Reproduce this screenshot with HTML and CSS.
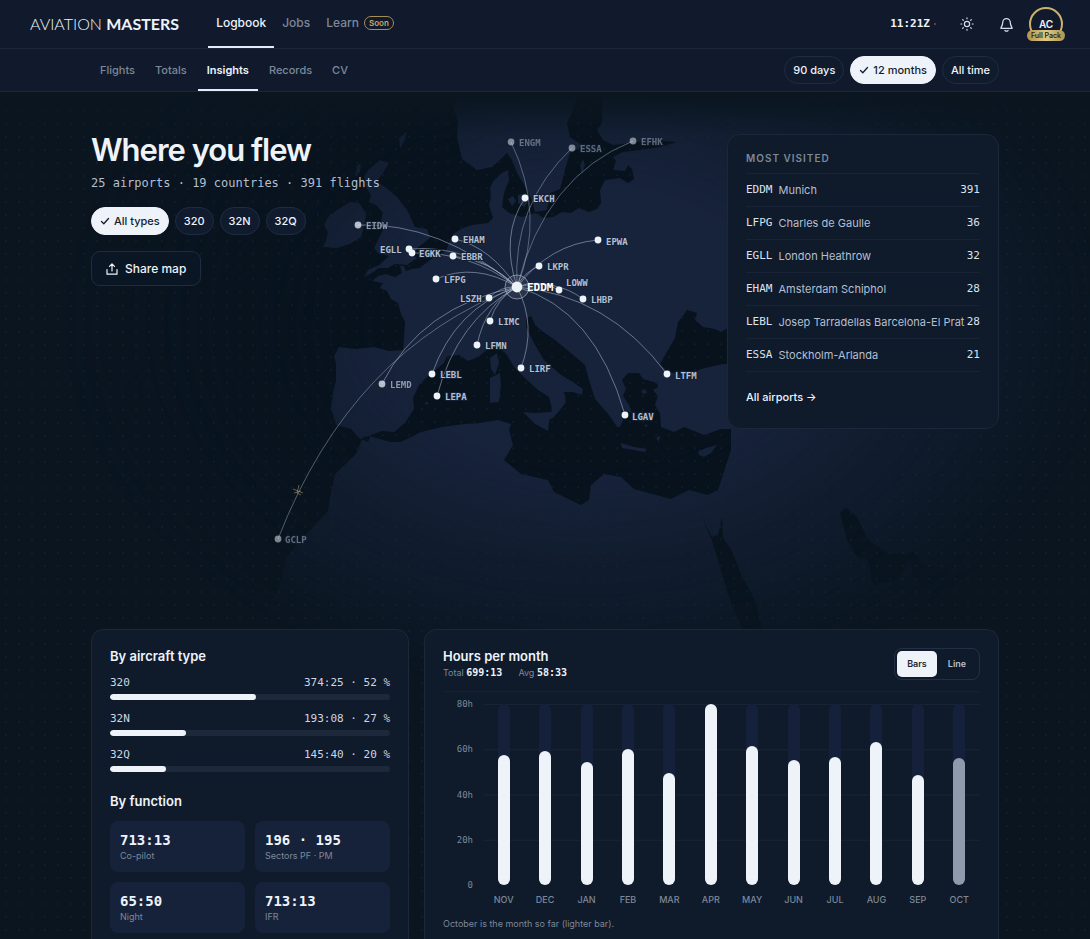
FILE: index.html
```html
<!DOCTYPE html>
<html lang="en">
<head>
<meta charset="utf-8">
<meta name="viewport" content="width=device-width, initial-scale=1">
<title>Aviation Masters – Insights</title>
<link rel="stylesheet" href="styles.css">
</head>
<body>
<header class="topbar">
  <a class="logo" href="#"><span>AVIATION</span> <b>MASTERS</b></a>
  <nav class="mainnav" aria-label="Main">
    <a class="is-active" href="#">Logbook</a>
    <a href="#">Jobs</a>
    <a href="#">Learn <span class="soon">Soon</span></a>
  </nav>
  <div class="tools">
    <span class="clock">11:21Z<i class="clock-dot"></i></span>
    <button class="icon-btn" type="button" aria-label="Theme">
      <svg width="14" height="14" viewBox="0 0 24 24" fill="none" stroke="currentColor" stroke-width="2" stroke-linecap="round"><circle cx="12" cy="12" r="4.5"/><path d="M12 1.5v1.5M12 21v1.5M1.5 12H3M21 12h1.500M4.600 4.600l1 1M18.400 18.400l1 1M4.600 19.400l1-1M18.400 5.600l1-1"/></svg>
    </button>
    <button class="icon-btn" type="button" aria-label="Notifications">
      <svg width="15" height="15" viewBox="0 0 24 24" fill="none" stroke="currentColor" stroke-width="2" stroke-linecap="round" stroke-linejoin="round"><path d="M6 8.500a6 6 0 0 1 12 0c0 6 3 7.500 3 9.500H3c0-2 3-3.500 3-9.500z"/><path d="M9.500 21.500c1.500 1.300 3.500 1.300 5 0"/></svg>
    </button>
    <button class="avatar" type="button"><span class="avatar-ring">AC</span><span class="pack">Full Pack</span></button>
  </div>
</header>

<div class="subbar">
  <div class="wrap subbar-in">
    <nav class="subnav" aria-label="Logbook">
      <a href="#">Flights</a>
      <a href="#">Totals</a>
      <a class="is-active" href="#">Insights</a>
      <a href="#">Records</a>
      <a href="#">CV</a>
    </nav>
    <div class="chips">
      <button class="chip" type="button">90 days</button>
      <button class="chip is-on" type="button"><svg width="10" height="10" viewBox="0 0 10 10" fill="none" stroke="currentColor" stroke-width="1.300" stroke-linecap="round" stroke-linejoin="round"><path d="M1.500 5.500l2.300 2.300L8.500 2.500"/></svg>12 months</button>
      <button class="chip" type="button">All time</button>
    </div>
  </div>
</div>

<main class="page">
  <svg class="map" viewBox="0 92 1090 608" role="img" aria-label="Route map">
    <defs>
      <radialGradient id="fade" gradientUnits="userSpaceOnUse" cx="0" cy="0" r="1" gradientTransform="translate(585 325) scale(520 370)">
        <stop offset="0" stop-color="#fff"/><stop offset=".38" stop-color="#fff"/><stop offset=".65" stop-color="#888"/><stop offset="1" stop-color="#000"/>
      </radialGradient>
      <mask id="m" maskUnits="userSpaceOnUse" x="0" y="92" width="1090" height="608"><rect x="0" y="92" width="1090" height="608" fill="url(#fade)"/></mask>
      <pattern id="dots" width="13" height="13" patternUnits="userSpaceOnUse"><circle cx="6" cy="6" r=".6" fill="#5a708c" fill-opacity=".35"/></pattern>
      <linearGradient id="gone" gradientUnits="userSpaceOnUse" x1="0" y1="92" x2="0" y2="135"><stop offset="0" stop-color="#0a1520"/><stop offset="1" stop-color="#0a1520" stop-opacity="0"/></linearGradient>
    </defs>
    <g mask="url(#m)">
      <rect x="0" y="92" width="1090" height="608" fill="#07121d"/>
      <rect x="0" y="92" width="1090" height="608" fill="url(#dots)"/>
      <g fill="#17233b">
        <path fill-rule="evenodd" d="M603 92l-1 31-5 7 6 10 10 5 17-2 22-3 25 2-17 5-20 3-17 2-10 5 3 4-3 9 12 1 3-6 4 4 2 10-6 4-8-5-15 2-5 10 1 13-4 6-8 3-10-4-8 5-9-1-9 5-9 1-9-5-13 4-13-4-7-6 2-14 5-13-1-10-6 3-8 7-4 8 1 10-2 7 4 13-5 5-8 1-8 1-9 3-10 6-4 9-3 8-16 9-10 8-8 1-6 2-2-5-4 0 2 7-7 4-9-3-8 2-6 5 11 2-3 5 7 3 4 8 7 4 3 11 4 8-1 15-1 13-14 1-15-4-18 2-17-2-5 9 2 8 0 16-3 13-2 15 5 17 15 4 8 9 9 4 3-7 11-4 12 1 11-9 9-14-1-11 6-13 9-9 16-13 3-7 12-1 9 6 10-4 9-7 12-3 8 8 7 12 13 13 11 10 11 7 3 12-3 10 4-1 7-8 6-8-2-10 9 0 9 3 1-6-10-7-12-7-17-15-10-17-8-16 0-9 5-2 4 9 7 6 13 9 17 14 13 11 4 15 6 19 8 9 6 7 8 12 3 0 4-9-3-8 11 3-3-8-6-9 3-7-4-9 6-7 11 0 4 6 14 4 1 4-5 3 5 6-3 9 5 8 1 14 13 5 10-5 20 8 17-6 10 0 0 21-13 40-10 5-19-5-18 9-37-10-13-12-17-3-13 11-2 15-8 5-27-13-6-12-27-6-17-14 9-15-4-15 2-6-13-4-18 3-16 1-22 3-21 5-20 10-11 0-20-6-7 1-7 17-21 20-5 23-2 14-28 30-14 16-5 24-15 33-13 80H1090V92zM660 364l8-14 7-12 3-16 9-12 10 3-2 7 8 7 12 2 6 3 30-18v50l-28 0-22 5-16 7-18-5zM702 517l10 20 6-2 4-18 1 21 9 13 10 26 13 23 7 30 0 70-12 0-7-70-13-30-10-33-8-27zM840 513l6-5 11 9 11 23 19 13 20 2 6-5 9 13 31 10 50 0 20 30 17 27 0 70h-103v-93l-10-17-14-13-3-17-13 20-24 5-5-25-11-3-10-17z"/>
        <path d="M457 92l-3 18 4 12-1 15 5 22 15 11 15-3 9-8 6-6 5 7 5 13 10 17 6 13 2 9 12-2 3-17 10-4 5-19 5-17 13-7-13-9-3-14 6-13 5-18z"/>
        <path d="M380 160l9 3-6 10-7 9 8 4 13 11 10 13 8 17 12 2 3 9-13 10-3 8 3 2-10 7-12-1-7 4-9 0-7 5-8 4 4-7 11-5 10-9-11-3-4-5 6-12 3-6-3-6 3-11-7-8-7-3 2-7-5-8-2-10 5-8z"/>
        <path d="M350 202l9 1 7 10-1 10-4 14-11 7-13 4-14-1 3-6 2-9-4-7 4-8 9-7z"/>
        <path d="M357 165l4-2-1 9-5 4zM508 199l5-3 3 5-4 5zM518 195l8-2 2 9-4 5-6-4zM580 165l3-6 2 6-3 10zM490 358l7-5 2 10-4 12-4-6zM490 378l10-5 1 12-2 17-9 1zM523 412l11 1 18-1-3 10-1 9-13-7zM621 443l13 4 13 2-2 3-23-4zM698 451l8-3 11-3-6 8-7 4-5-2zM641 391l4-2 2 4-4 1zM634 403l3-2 2 3-3 3zM656 438l4-3-1 7zM424 403l4-1 0 3zM636 418l3-2 2 4zM644 426l2-2 3 3zM294 524l2-7 1 4zM286 534l4-2-2 5z"/>
        <path d="M399 138l8-7-2 9-5 9zM164 407l6-1-2 2zM260 479l5-1-2 2z"/>
      </g>
      <path d="M635 390l3 6 5 2 2 8-6-3-4 7-3-9-5-3 6-2zM628 424l8 5-2 7 9 3-7 2-5-7-6-3zM645 409l7 2 1 7-6-3z" fill="#07121d"/>
    </g>
    <rect x="0" y="92" width="1090" height="43" fill="url(#gone)"/>
    <g class="arcs">
      <path d="M358 225Q440 222 517 287M455 239Q490 247 517 287M409 249Q470 244 517 287M412 253Q470 251 517 287M453 256Q490 260 517 287M436 279Q475 262 517 287M525 198Q500 235 517 287M517 287Q550 244 598 240M517 287Q524 272 539 266M517 287Q538 278 559 290M517 287Q555 278 583 299M517 287Q608 295 667 374M517 287Q595 309 625 415M517 287Q537 325 521 368M517 287Q486 303 477 345M517 287Q497 298 490 321M517 287Q500 286 489 298M517 287Q455 308 432 374M517 287Q457 320 437 396M517 287Q421 306 382 384"/>
      <path d="M517 287Q546 215 511 142M517 287Q512 205 572 148M517 287Q545 176 633 141M517 287Q352 349 278 539"/>
    </g>
    <path d="M293 489l10 4M294 493l7-2M299 485l-2 8 4 2" stroke="#a58d68" stroke-opacity=".6" stroke-width="1" fill="none"/>
    <circle cx="517" cy="287" r="12" fill="#fff" fill-opacity=".08" stroke="#b9c5da" stroke-opacity=".6"/>
    <g class="pins">
      <circle cx="525" cy="198" r="3.400"/><circle cx="455" cy="239" r="3.400"/><circle cx="409" cy="249" r="3.400"/><circle cx="412" cy="253" r="3.400"/><circle cx="453" cy="256" r="3.400"/><circle cx="436" cy="279" r="3.400"/><circle cx="598" cy="240" r="3.400"/><circle cx="539" cy="266" r="3.400"/><circle cx="559" cy="290" r="3.400"/><circle cx="583" cy="299" r="3.400"/><circle cx="667" cy="374" r="3.400"/><circle cx="625" cy="415" r="3.400"/><circle cx="521" cy="368" r="3.400"/><circle cx="477" cy="345" r="3.400"/><circle cx="490" cy="321" r="3.400"/><circle cx="489" cy="298" r="3.400"/><circle cx="432" cy="374" r="3.400"/><circle cx="437" cy="396" r="3.400"/><circle cx="517" cy="287" r="5.400"/>
    </g>
    <g class="pins mid"><circle cx="358" cy="225" r="3.400"/><circle cx="382" cy="384" r="3.400"/></g>
    <g class="pins dim"><circle cx="511" cy="142" r="3.400"/><circle cx="572" cy="148" r="3.400"/><circle cx="633" cy="141" r="3.400"/><circle cx="278" cy="539" r="3.400"/></g>
    <g class="codes">
      <text x="533" y="202">EKCH</text><text x="463" y="243">EHAM</text><text x="380" y="253">EGLL</text><text x="419" y="257">EGKK</text><text x="461" y="260">EBBR</text><text x="444" y="283">LFPG</text><text x="606" y="245">EPWA</text><text x="547" y="270">LKPR</text><text x="566" y="286">LOWW</text><text x="591" y="303">LHBP</text><text x="675" y="379">LTFM</text><text x="632" y="420">LGAV</text><text x="529" y="372">LIRF</text><text x="485" y="349">LFMN</text><text x="498" y="325">LIMC</text><text x="460" y="302">LSZH</text><text x="440" y="378">LEBL</text><text x="445" y="400">LEPA</text>
    </g>
    <g class="codes mid"><text x="366" y="229">EIDW</text><text x="390" y="388">LEMD</text></g>
    <g class="codes dim"><text x="519" y="146">ENGM</text><text x="580" y="152">ESSA</text><text x="641" y="145">EFHK</text><text x="285" y="543">GCLP</text></g>
    <text class="home" x="527" y="291">EDDM</text>
  </svg>

  <div class="wrap content">
    <section class="hero">
      <div class="intro">
        <h1>Where you flew</h1>
        <p class="summary">25 airports · 19 countries · 391 flights</p>
        <div class="chips">
          <button class="chip is-on" type="button"><svg width="10" height="10" viewBox="0 0 10 10" fill="none" stroke="currentColor" stroke-width="1.300" stroke-linecap="round" stroke-linejoin="round"><path d="M1.500 5.500l2.300 2.300L8.500 2.500"/></svg>All types</button>
          <button class="chip" type="button">320</button>
          <button class="chip" type="button">32N</button>
          <button class="chip" type="button">32Q</button>
        </div>
        <button class="share" type="button"><svg width="12" height="12" viewBox="0 0 12 12" fill="none" stroke="currentColor" stroke-width="1.200" stroke-linecap="round" stroke-linejoin="round"><path d="M6 8V1M3.500 3.300L6 .8l2.500 2.500M1 6.500v4.700h10V6.500"/></svg>Share map</button>
      </div>
      <aside class="card visited">
        <h2>MOST VISITED</h2>
        <table>
          <tbody>
          <tr><th scope="row">EDDM</th><td>Munich</td><td class="num">391</td></tr>
          <tr><th scope="row">LFPG</th><td>Charles de Gaulle</td><td class="num">36</td></tr>
          <tr><th scope="row">EGLL</th><td>London Heathrow</td><td class="num">32</td></tr>
          <tr><th scope="row">EHAM</th><td>Amsterdam Schiphol</td><td class="num">28</td></tr>
          <tr><th scope="row">LEBL</th><td>Josep Tarradellas Barcelona-El Prat</td><td class="num">28</td></tr>
          <tr><th scope="row">ESSA</th><td>Stockholm-Arlanda</td><td class="num">21</td></tr>
          </tbody>
        </table>
        <a class="all" href="#">All airports →</a>
      </aside>
    </section>

    <div class="panels">
      <section class="card panel">
        <h2>By aircraft type</h2>
        <div class="types">
          <div class="type"><span>320</span><span>374:25 · 52 %</span><div class="track"><div class="fill" style="width:52%"></div></div></div>
          <div class="type"><span>32N</span><span>193:08 · 27 %</span><div class="track"><div class="fill" style="width:27%"></div></div></div>
          <div class="type"><span>32Q</span><span>145:40 · 20 %</span><div class="track"><div class="fill" style="width:20%"></div></div></div>
        </div>
        <h2>By function</h2>
        <dl class="tiles">
          <div class="tile"><dd>713:13</dd><dt>Co-pilot</dt></div>
          <div class="tile"><dd>196 · 195</dd><dt>Sectors PF · PM</dt></div>
          <div class="tile"><dd>65:50</dd><dt>Night</dt></div>
          <div class="tile"><dd>713:13</dd><dt>IFR</dt></div>
        </dl>
      </section>

      <section class="card panel">
        <div class="chart-head">
          <div>
            <h2>Hours per month</h2>
            <p class="sums"><span>Total <b>699:13</b></span><span>Avg <b>58:33</b></span></p>
          </div>
          <div class="switch">
            <button class="is-on" type="button">Bars</button>
            <button type="button">Line</button>
          </div>
        </div>
        <div class="chart">
          <div class="scale"><span>80h</span><span>60h</span><span>40h</span><span>20h</span><span>0</span></div>
          <div class="plot">
            <div class="bar"><div style="height:72%"></div></div>
            <div class="bar"><div style="height:74%"></div></div>
            <div class="bar"><div style="height:68%"></div></div>
            <div class="bar"><div style="height:75%"></div></div>
            <div class="bar"><div style="height:62%"></div></div>
            <div class="bar"><div style="height:100%"></div></div>
            <div class="bar"><div style="height:77%"></div></div>
            <div class="bar"><div style="height:69%"></div></div>
            <div class="bar"><div style="height:71%"></div></div>
            <div class="bar"><div style="height:79%"></div></div>
            <div class="bar"><div style="height:61%"></div></div>
            <div class="bar so-far"><div style="height:70%"></div></div>
          </div>
          <div class="months"><span>NOV</span><span>DEC</span><span>JAN</span><span>FEB</span><span>MAR</span><span>APR</span><span>MAY</span><span>JUN</span><span>JUL</span><span>AUG</span><span>SEP</span><span>OCT</span></div>
        </div>
        <p class="note">October is the month so far (lighter bar).</p>
      </section>
    </div>
  </div>
</main>
</body>
</html>
```
FILE: styles.css
```css
:root {
  --bg: #0a1520;
  --bar: #101a2c;
  --panel: #0f1a2b;
  --line: #1b2839;
  --text: #eef3fa;
  --soft: #b4bfd0;
  --muted: #7d8898;
  --mono: "DejaVu Sans Mono", "Liberation Mono", monospace;
}
* { box-sizing: border-box; }
body {
  margin: 0;
  min-height: 100vh;
  display: flex;
  flex-direction: column;
  background: var(--bg);
  color: var(--text);
  font: 12px/16px Inter, sans-serif;
}
h1, h2, p, dl, dd { margin: 0; }
a { color: inherit; text-decoration: none; }
button { font: inherit; color: inherit; background: none; border: 0; padding: 0; cursor: pointer; }
.wrap { width: 100%; max-width: 908px; margin: 0 auto; }

.topbar {
  height: 49px;
  display: flex;
  align-items: center;
  padding: 0 25px 0 30px;
  background: var(--bar);
  border-bottom: 1px solid var(--line);
}
.logo { font: 300 16px/20px Lato, sans-serif; margin-right: 29px; }
.logo b { font-weight: 700; }
.mainnav { display: flex; align-self: stretch; }
.mainnav a {
  display: flex;
  align-items: center;
  gap: 5px;
  padding: 0 8px;
  font-size: 12px;
  font-weight: 500;
  color: var(--muted);
  border-bottom: 2px solid transparent;
}
.mainnav a.is-active, .subnav a.is-active { color: var(--text); border-color: #e3eaf8; }
.subnav a.is-active { font-weight: 600; }
.soon {
  font-size: 8px;
  line-height: 12px;
  font-weight: 600;
  color: #c9a866;
  border: 1px solid #a88d55;
  border-radius: 7px;
  padding: 0 4px;
}
.tools { display: flex; align-items: center; margin-left: auto; }
.clock { display: flex; align-items: center; gap: 4px; font: bold 11px/16px var(--mono); margin-right: 18px; }
.clock-dot { width: 2px; height: 2px; border-radius: 1px; background: #8a4552; }
.icon-btn { display: grid; place-items: center; width: 26px; height: 26px; margin-right: 13px; color: #d5deec; }
.icon-btn + .icon-btn { margin-right: 8px; }
.avatar { position: relative; width: 38px; height: 34px; }
.avatar-ring {
  display: grid;
  place-items: center;
  width: 34px;
  height: 34px;
  margin: 0 auto;
  border: 2px solid #cdb26c;
  border-radius: 50%;
  font-size: 10px;
  font-weight: 600;
}
.pack {
  position: absolute;
  left: 0;
  right: 0;
  bottom: 0;
  border-radius: 6px;
  background: linear-gradient(90deg, #b0924c, #e0c985, #b0924c);
  color: #30270f;
  font-size: 7px;
  line-height: 11px;
  font-weight: 600;
  white-space: nowrap;
}

.subbar { background: var(--bar); border-bottom: 1px solid var(--line); }
.subbar-in { display: flex; justify-content: space-between; align-items: center; height: 42px; }
.subnav { display: flex; align-self: stretch; gap: 2px; }
.subnav a {
  display: flex;
  align-items: center;
  padding: 2px 9px 0;
  font-size: 11px;
  font-weight: 500;
  color: var(--muted);
  border-bottom: 2px solid transparent;
}
.chips { display: flex; gap: 6px; }
.chip {
  display: flex;
  align-items: center;
  gap: 4px;
  height: 28px;
  padding: 0 8px;
  border: 1px solid #1e2c42;
  border-radius: 14px;
  background: #101b2d;
  font-size: 11px;
  font-weight: 500;
}
.chip.is-on { background: var(--text); border-color: var(--text); color: #141d2c; }

.page {
  position: relative;
  flex: 1;
  display: flex;
  background: radial-gradient(circle at 6px 6px, #101d29 1px, transparent 1px) 0 0 / 13px 13px;
}
.map { position: absolute; top: 0; left: 0; width: 100%; height: auto; }
.arcs { fill: none; stroke: #a9b8d2; stroke-opacity: .55; stroke-width: 1; }
.arcs path + path { stroke-opacity: .45; }
.pins { fill: #eef3fa; }
.codes { fill: #b3c0d3; font: bold 9px var(--mono); paint-order: stroke; stroke: #141f35; stroke-width: 2px; }
.mid { opacity: .75; }
.dim { opacity: .5; }
.home { fill: #fff; font: bold 11px var(--mono); }

.content { position: relative; display: flex; flex-direction: column; }
.hero {
  display: flex;
  justify-content: space-between;
  align-items: flex-start;
  min-height: 537px;
  padding-top: 42px;
}
.intro { display: flex; flex-direction: column; align-items: flex-start; }
h1 { font-size: 31px; line-height: 32px; font-weight: 600; letter-spacing: -1px; margin-bottom: 8px; }
.summary { font: 12px/18px var(--mono); color: var(--soft); margin-bottom: 15px; }
.share {
  display: flex;
  align-items: center;
  gap: 7px;
  height: 35px;
  margin-top: 16px;
  padding: 0 14px;
  border: 1px solid #1e2c42;
  border-radius: 9px;
  background: #0b1624;
  font-size: 12px;
  font-weight: 500;
}
.card { background: var(--panel); border: 1px solid var(--line); border-radius: 13px; }
.visited { width: 272px; padding: 15px 18px 23px; }
.visited h2 { font-size: 10px; line-height: 16px; font-weight: 600; letter-spacing: 1px; color: var(--muted); margin-bottom: 7px; }
table, tbody { display: block; }
tbody { border-top: 1px solid #182435; }
tr { display: flex; align-items: center; height: 33px; border-bottom: 1px solid #182435; }
th, td { padding: 0; text-align: left; font-size: 11px; color: var(--soft); white-space: nowrap; }
th { padding-right: 6px; font: 11px/16px var(--mono); color: #dbe3ef; }
.num { margin-left: auto; font: 11px/16px var(--mono); color: #dbe3ef; }
.all { display: inline-block; margin-top: 17px; font-size: 11px; font-weight: 500; }

.panels { flex: 1; display: grid; grid-template-columns: 318fr 575fr; gap: 15px; }
.panel { border-bottom: 0; border-radius: 13px 13px 0 0; padding: 18px 18px 0; }
.panel h2 { font-size: 13px; line-height: 17px; font-weight: 600; }
.types { display: grid; gap: 11px; margin: 10px 0 21px; }
.type { display: flex; flex-wrap: wrap; justify-content: space-between; font: 11px/16px var(--mono); color: #cdd6e4; }
.track { width: 100%; height: 6px; margin-top: 3px; border-radius: 3px; background: #1d283b; overflow: hidden; }
.fill { height: 100%; border-radius: 3px; background: var(--text); }
.tiles { display: grid; grid-template-columns: 1fr 1fr; gap: 10px; margin-top: 11px; }
.tile { display: flex; flex-direction: column; height: 51px; padding: 11px 10px 0; border-radius: 8px; background: #16223a; }
.tile dd { font: bold 14px/17px var(--mono); }
.tile dt { font-size: 9px; line-height: 13px; color: var(--muted); }

.chart-head {
  display: flex;
  justify-content: space-between;
  align-items: flex-start;
  padding-bottom: 10px;
  border-bottom: 1px solid #152031;
}
.sums { display: flex; gap: 16px; font-size: 9px; line-height: 16px; color: var(--muted); }
.sums b { font: bold 10px/16px var(--mono); color: var(--text); }
.switch { display: flex; padding: 2px; border: 1px solid #223046; border-radius: 8px; }
.switch button { width: 40px; height: 26px; border-radius: 5px; font-size: 9px; font-weight: 600; color: var(--soft); }
.switch .is-on { background: var(--text); color: #1a2332; }
.chart { display: grid; grid-template-columns: 30px 1fr; column-gap: 10px; margin-top: 12px; }
.scale {
  display: flex;
  flex-direction: column;
  justify-content: space-between;
  height: 193px;
  margin: -6px 0;
  text-align: right;
  font: 9px/12px var(--mono);
  color: var(--muted);
}
.plot {
  display: grid;
  grid-template-columns: repeat(12, 1fr);
  justify-items: center;
  height: 181px;
  background: linear-gradient(#182435 1px, transparent 1px) 0 0 / 100% 25%;
}
.bar { display: flex; align-items: flex-end; width: 12px; height: 181px; border-radius: 6px; background: #15213a; }
.bar div { width: 100%; border-radius: 6px; background: var(--text); }
.so-far div { background: #8f9aad; }
.months {
  grid-column: 2;
  display: grid;
  grid-template-columns: repeat(12, 1fr);
  margin-top: 9px;
  text-align: center;
  font-size: 9px;
  line-height: 12px;
  font-weight: 500;
  color: var(--muted);
}
.note { margin-top: 11px; font-size: 9px; line-height: 14px; color: var(--muted); }
```
